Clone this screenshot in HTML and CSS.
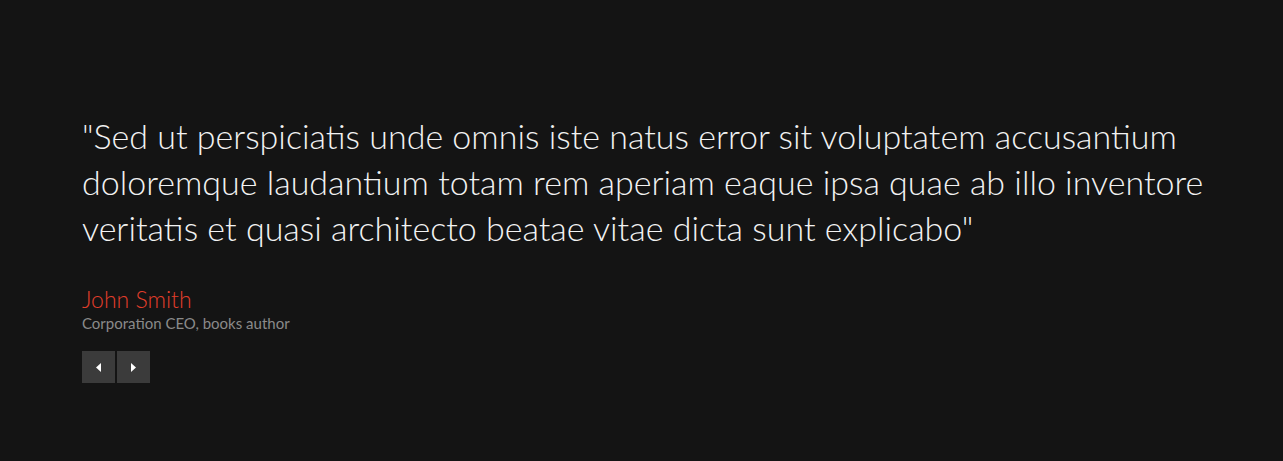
FILE: index.html
```html
<!DOCTYPE html>
<html>
<head>
<meta charset="utf-8">
<link rel="stylesheet" href="styles.css">
</head>
<body>
<section class="testimonial">
  <blockquote class="quote">"Sed ut perspiciatis unde omnis iste natus error sit voluptatem accusantium doloremque laudantium totam rem aperiam eaque ipsa quae ab illo inventore veritatis et quasi architecto beatae vitae dicta sunt explicabo"</blockquote>
  <div class="author">John Smith</div>
  <div class="role">Corporation CEO, books author</div>
  <div class="nav">
    <button class="nav-btn" aria-label="Previous"><svg width="5" height="9" viewBox="0 0 5 9"><path d="M5 0 L0 4.5 L5 9 Z" fill="#fff"/></svg></button>
    <button class="nav-btn" aria-label="Next"><svg width="5" height="9" viewBox="0 0 5 9"><path d="M0 0 L5 4.5 L0 9 Z" fill="#fff"/></svg></button>
  </div>
</section>
</body>
</html>
```
FILE: styles.css
```css
html, body {
  margin: 0;
  padding: 0;
  background: #141414;
  height: 100%;
}
body {
  font-family: "Lato", "Open Sans", sans-serif;
}
.testimonial {
  padding: 113px 0 0 82px;
}
.quote {
  margin: 0;
  width: 1150px;
  color: #f2f2f2;
  font-size: 34px;
  font-weight: 300;
  line-height: 46px;
}
.author {
  margin-top: 34px;
  color: #e23e2b;
  font-size: 23px;
  font-weight: 300;
  line-height: 28px;
}
.role {
  color: #8a8a8a;
  font-size: 15px;
  line-height: 20px;
}
.nav {
  display: flex;
  gap: 2px;
  margin-top: 18px;
}
.nav-btn {
  width: 33px;
  height: 32px;
  border: 0;
  padding: 0;
  background: #3b3b3b;
  display: flex;
  align-items: center;
  justify-content: center;
}
```
